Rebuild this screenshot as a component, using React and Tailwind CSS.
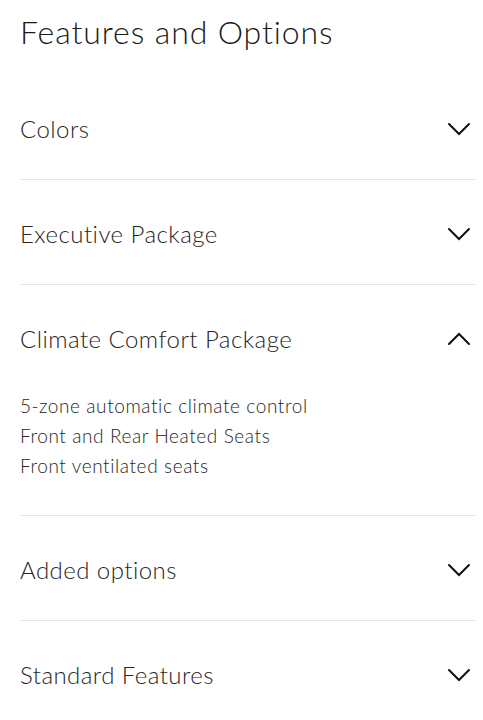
import { useState } from 'react';

const sections = [
  { title: 'Colors', items: [] },
  { title: 'Executive Package', items: [] },
  {
    title: 'Climate Comfort Package',
    items: ['5-zone automatic climate control', 'Front and Rear Heated Seats', 'Front ventilated seats'],
  },
  { title: 'Added options', items: [] },
  { title: 'Standard Features', items: [] },
];

function Chevron({ open }) {
  return (
    <svg width="24" height="14" viewBox="0 0 24 14" fill="none" className="shrink-0">
      <path
        d={open ? 'M2 12 L12 2 L22 12' : 'M2 2 L12 12 L22 2'}
        stroke="#111"
        strokeWidth="2"
        strokeLinecap="round"
        strokeLinejoin="miter"
      />
    </svg>
  );
}

export default function App() {
  const [open, setOpen] = useState('Climate Comfort Package');

  return (
    <div className="min-h-screen bg-white pl-5 pr-[7px] font-['Lato',sans-serif] text-[#262626]">
      <div className="h-[75px] pt-[12px]">
        <h1 className="text-[32px] leading-10 font-light tracking-[0.9px] text-[#1a1a1a]">Features and Options</h1>
      </div>

      {sections.map((section, idx) => {
        const isOpen = open === section.title;
        return (
          <div key={section.title} className={idx < sections.length - 1 ? 'border-b border-[#e6e6e6]' : ''}>
            <button
              onClick={() => setOpen(isOpen ? null : section.title)}
              className="flex h-[104px] w-full items-center justify-between pt-1 pr-[5px] text-left"
            >
              <span className="text-[24px] leading-8 font-light tracking-[0.45px]">{section.title}</span>
              <Chevron open={isOpen} />
            </button>
            {isOpen && section.items.length > 0 && (
              <div className="pt-[2px] pb-[34px]">
                {section.items.map((item) => (
                  <p key={item} className="text-[19px] leading-[30px] font-light tracking-[0.6px]">
                    {item}
                  </p>
                ))}
              </div>
            )}
          </div>
        );
      })}
    </div>
  );
}
